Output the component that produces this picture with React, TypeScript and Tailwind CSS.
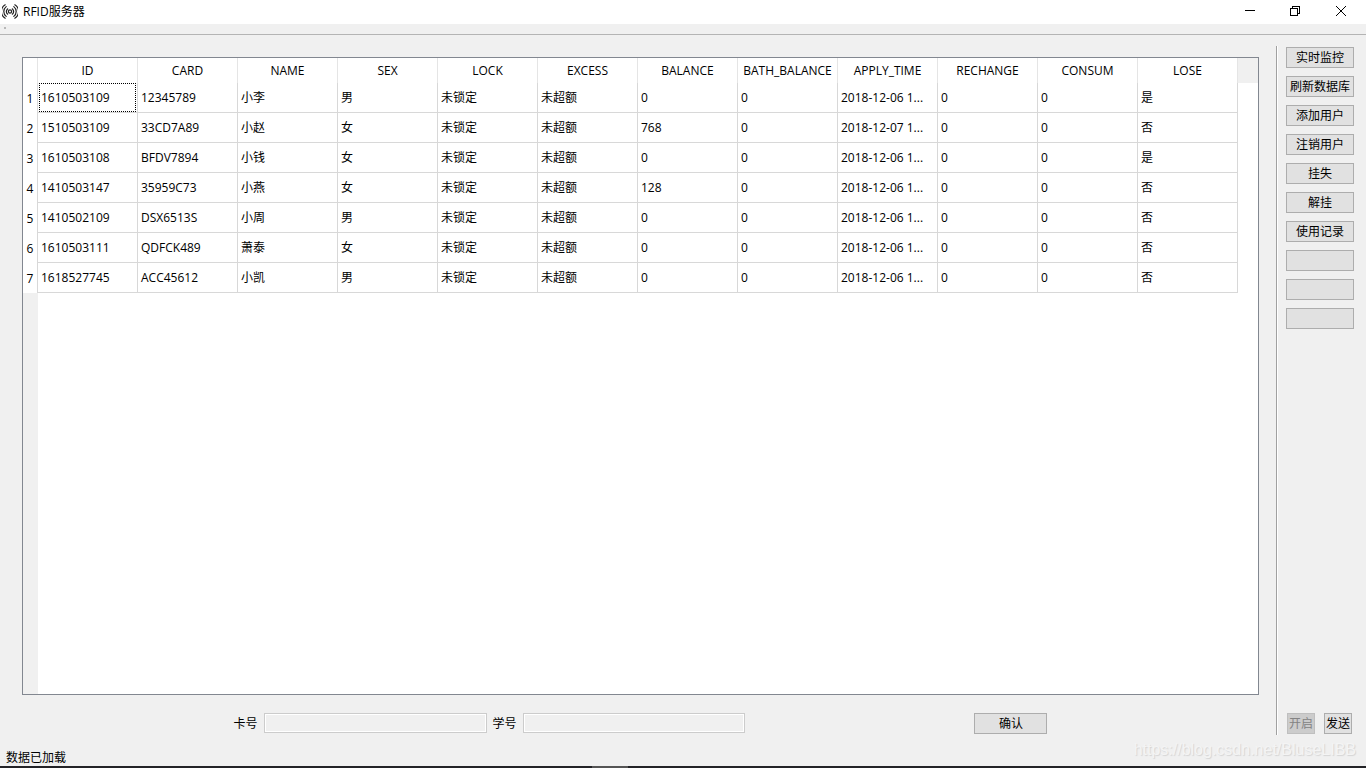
import React, { useState } from 'react';

const UI_FONT = "font-['Open_Sans','Noto_Sans_CJK_SC',sans-serif]";
const CJK_FONT = "font-['Liberation_Sans','Noto_Sans_CJK_SC',sans-serif]";

const COLUMNS = [
    'ID', 'CARD', 'NAME', 'SEX', 'LOCK', 'EXCESS', 'BALANCE',
    'BATH_BALANCE', 'APPLY_TIME', 'RECHANGE', 'CONSUM', 'LOSE',
];

const ROWS = [
    ['1610503109', '12345789', '小李', '男', '未锁定', '未超额', '0', '0', '2018-12-06 1...', '0', '0', '是'],
    ['1510503109', '33CD7A89', '小赵', '女', '未锁定', '未超额', '768', '0', '2018-12-07 1...', '0', '0', '否'],
    ['1610503108', 'BFDV7894', '小钱', '女', '未锁定', '未超额', '0', '0', '2018-12-06 1...', '0', '0', '是'],
    ['1410503147', '35959C73', '小燕', '女', '未锁定', '未超额', '128', '0', '2018-12-06 1...', '0', '0', '否'],
    ['1410502109', 'DSX6513S', '小周', '男', '未锁定', '未超额', '0', '0', '2018-12-06 1...', '0', '0', '否'],
    ['1610503111', 'QDFCK489', '萧泰', '女', '未锁定', '未超额', '0', '0', '2018-12-06 1...', '0', '0', '否'],
    ['1618527745', 'ACC45612', '小凯', '男', '未锁定', '未超额', '0', '0', '2018-12-06 1...', '0', '0', '否'],
];

const ACTIONS = ['实时监控', '刷新数据库', '添加用户', '注销用户', '挂失', '解挂', '使用记录', '', '', ''];

interface PushButtonProps {
    label: string;
    className?: string;
    disabled?: boolean;
    ariaLabel?: string;
}

const PushButton: React.FC<PushButtonProps> = ({ label, className = '', disabled, ariaLabel }) => (
    <button
        type="button"
        disabled={disabled}
        aria-label={ariaLabel}
        className={`${CJK_FONT} h-[21px] border border-[#adadad] bg-[#e1e1e1] pt-0.5 text-xs leading-[17px] whitespace-nowrap text-black hover:border-[#0078d7] hover:bg-[#e5f1fb] disabled:border-[#bfbfbf] disabled:bg-[#cccccc] disabled:text-[#838383] ${className}`}
    >
        {label}
    </button>
);

const TitleBar = () => (
    <header className="flex h-6 items-center bg-white pr-0.5 pb-px pl-0.5">
        <svg className="h-4 w-4" viewBox="0 0 16 16" fill="none" stroke="#222" strokeWidth="1.2" strokeLinecap="round">
            <circle cx="8" cy="7.5" r="1.6" />
            <path d="M5.6 4.8a4 4 0 0 0 0 5.4M10.4 4.8a4 4 0 0 1 0 5.4" />
            <path d="M4.2 2.6a6.2 6.2 0 0 0 0 9.8M11.8 2.6a6.2 6.2 0 0 1 0 9.8" />
            <path d="M3.2 0.8a7.8 7.8 0 0 0 0 13.4M12.8 0.8a7.8 7.8 0 0 1 0 13.4" />
        </svg>
        <h1 className="ml-[5px] text-xs leading-4">RFID服务器</h1>
        <div className="ml-auto flex h-full">
            <button type="button" aria-label="最小化" className="flex h-full w-[46px] items-center justify-center hover:bg-[#e5e5e5]">
                <svg className="h-3 w-3" viewBox="0 0 12 12" stroke="#000" shapeRendering="crispEdges">
                    <path d="M2 4.5h10" />
                </svg>
            </button>
            <button type="button" aria-label="还原" className="flex h-full w-[46px] items-center justify-center hover:bg-[#e5e5e5]">
                <svg className="h-3 w-3" viewBox="0 0 12 12" fill="none" stroke="#000" shapeRendering="crispEdges">
                    <path d="M1.5 2.5h7v7h-7zM3.5 2.5v-2h7v7h-2" />
                </svg>
            </button>
            <button type="button" aria-label="关闭" className="flex h-full w-[46px] items-center justify-center hover:bg-[#e81123]">
                <svg className="h-3 w-3" viewBox="0 0 12 12" stroke="#000" strokeWidth="1">
                    <path d="M1 0l10 10M11 0L1 10" />
                </svg>
            </button>
        </div>
    </header>
);

const UserTable = () => {
    const [focused, setFocused] = useState('0-0');

    return (
        <div className="flex flex-1 flex-col border border-[#828790] bg-white">
            <table className="w-full table-fixed border-separate border-spacing-0 text-xs">
                <colgroup>
                    <col className="w-[15px]" />
                    {COLUMNS.map(name => (
                        <col key={name} className="w-[100px]" />
                    ))}
                    <col />
                </colgroup>
                <thead>
                    <tr className="h-[25px]">
                        <th className="border-r border-[#e5e5e5] p-0" />
                        {COLUMNS.map(name => (
                            <th key={name} scope="col" className="border-r border-[#e5e5e5] p-0 text-center font-normal whitespace-nowrap">
                                {name}
                            </th>
                        ))}
                        <th className="bg-[#f0f0f0] p-0" />
                    </tr>
                </thead>
                <tbody>
                    {ROWS.map((row, r) => (
                        <tr key={row[0]} className="h-[30px]">
                            <th scope="row" className="border-r border-[#d8d8d8] p-0 pt-0.5 text-center font-normal">{r + 1}</th>
                            {row.map((value, c) => {
                                const id = `${r}-${c}`;
                                return (
                                    <td key={id} onClick={() => setFocused(id)} className="border-r border-b border-[#d8d8d8] p-0">
                                        <div className={`mx-px flex h-[29px] items-center border border-dotted pl-px whitespace-nowrap ${focused === id ? 'border-black' : 'border-transparent'}`}>
                                            {value}
                                        </div>
                                    </td>
                                );
                            })}
                            <td className="p-0" />
                        </tr>
                    ))}
                </tbody>
            </table>
            <div className="w-[15px] flex-1 bg-[#f0f0f0]" />
        </div>
    );
};

const CardForm = () => (
    <form className={`${CJK_FONT} mt-[18px] flex h-[22px] items-start justify-between px-[17.1%] text-xs`} onSubmit={e => e.preventDefault()}>
        <div className="flex items-center gap-1.5">
            <label htmlFor="card" className="pt-0.5">卡号</label>
            <input id="card" disabled className="h-5 w-[223px] border border-[#cccccc] bg-[#f0f0f0] px-1 ring-1 ring-white ring-inset" />
            <label htmlFor="student" className="pt-0.5">学号</label>
            <input id="student" disabled className="h-5 w-[222px] border border-[#cccccc] bg-[#f0f0f0] px-1 ring-1 ring-white ring-inset" />
        </div>
        <PushButton label="确认" className="w-[73px]" />
    </form>
);

const App: React.FC = () => (
    <div className={`${UI_FONT} relative flex min-h-screen flex-col bg-[#f0f0f0] text-black`}>
        <TitleBar />
        <div className="h-[11px] border-b border-[#b4b4b4] pt-[3px] pl-1">
            <div className="h-0.5 w-0.5 bg-[#b8b8b8]" />
        </div>

        <main className="flex flex-1 pt-[11px] pr-3 pl-[22px]">
            <section className="flex flex-1 flex-col pt-[11px]">
                <UserTable />
                <CardForm />
            </section>
            <div className="ml-[17px] w-0.5 border-r border-l border-r-white border-l-[#a0a0a0]" />
            <aside className="ml-2 flex w-[68px] flex-col gap-2 pt-px pb-px">
                {ACTIONS.map((label, i) => (
                    <PushButton key={i} label={label} ariaLabel={label || `备用 ${i + 1}`} />
                ))}
                <div className="mt-auto flex justify-between pr-0.5 pl-px">
                    <PushButton label="开启" className="w-7" disabled />
                    <PushButton label="发送" className="w-7" />
                </div>
            </aside>
        </main>

        <footer className="flex h-[31px] items-end pl-1.5 text-xs leading-4">数据已加载</footer>
        <div className="flex h-0.5 justify-center bg-[#232327] pr-[146px]">
            <div className="w-9 bg-[#555555]" />
        </div>

        <span className="pointer-events-none absolute right-2.5 bottom-2 font-['Liberation_Sans',sans-serif] text-base leading-5 text-[#f4f4f4] [text-shadow:1px_1px_1px_#d4d4d4]">
            https://blog.csdn.net/BluseLIBB
        </span>
    </div>
);

export default App;
